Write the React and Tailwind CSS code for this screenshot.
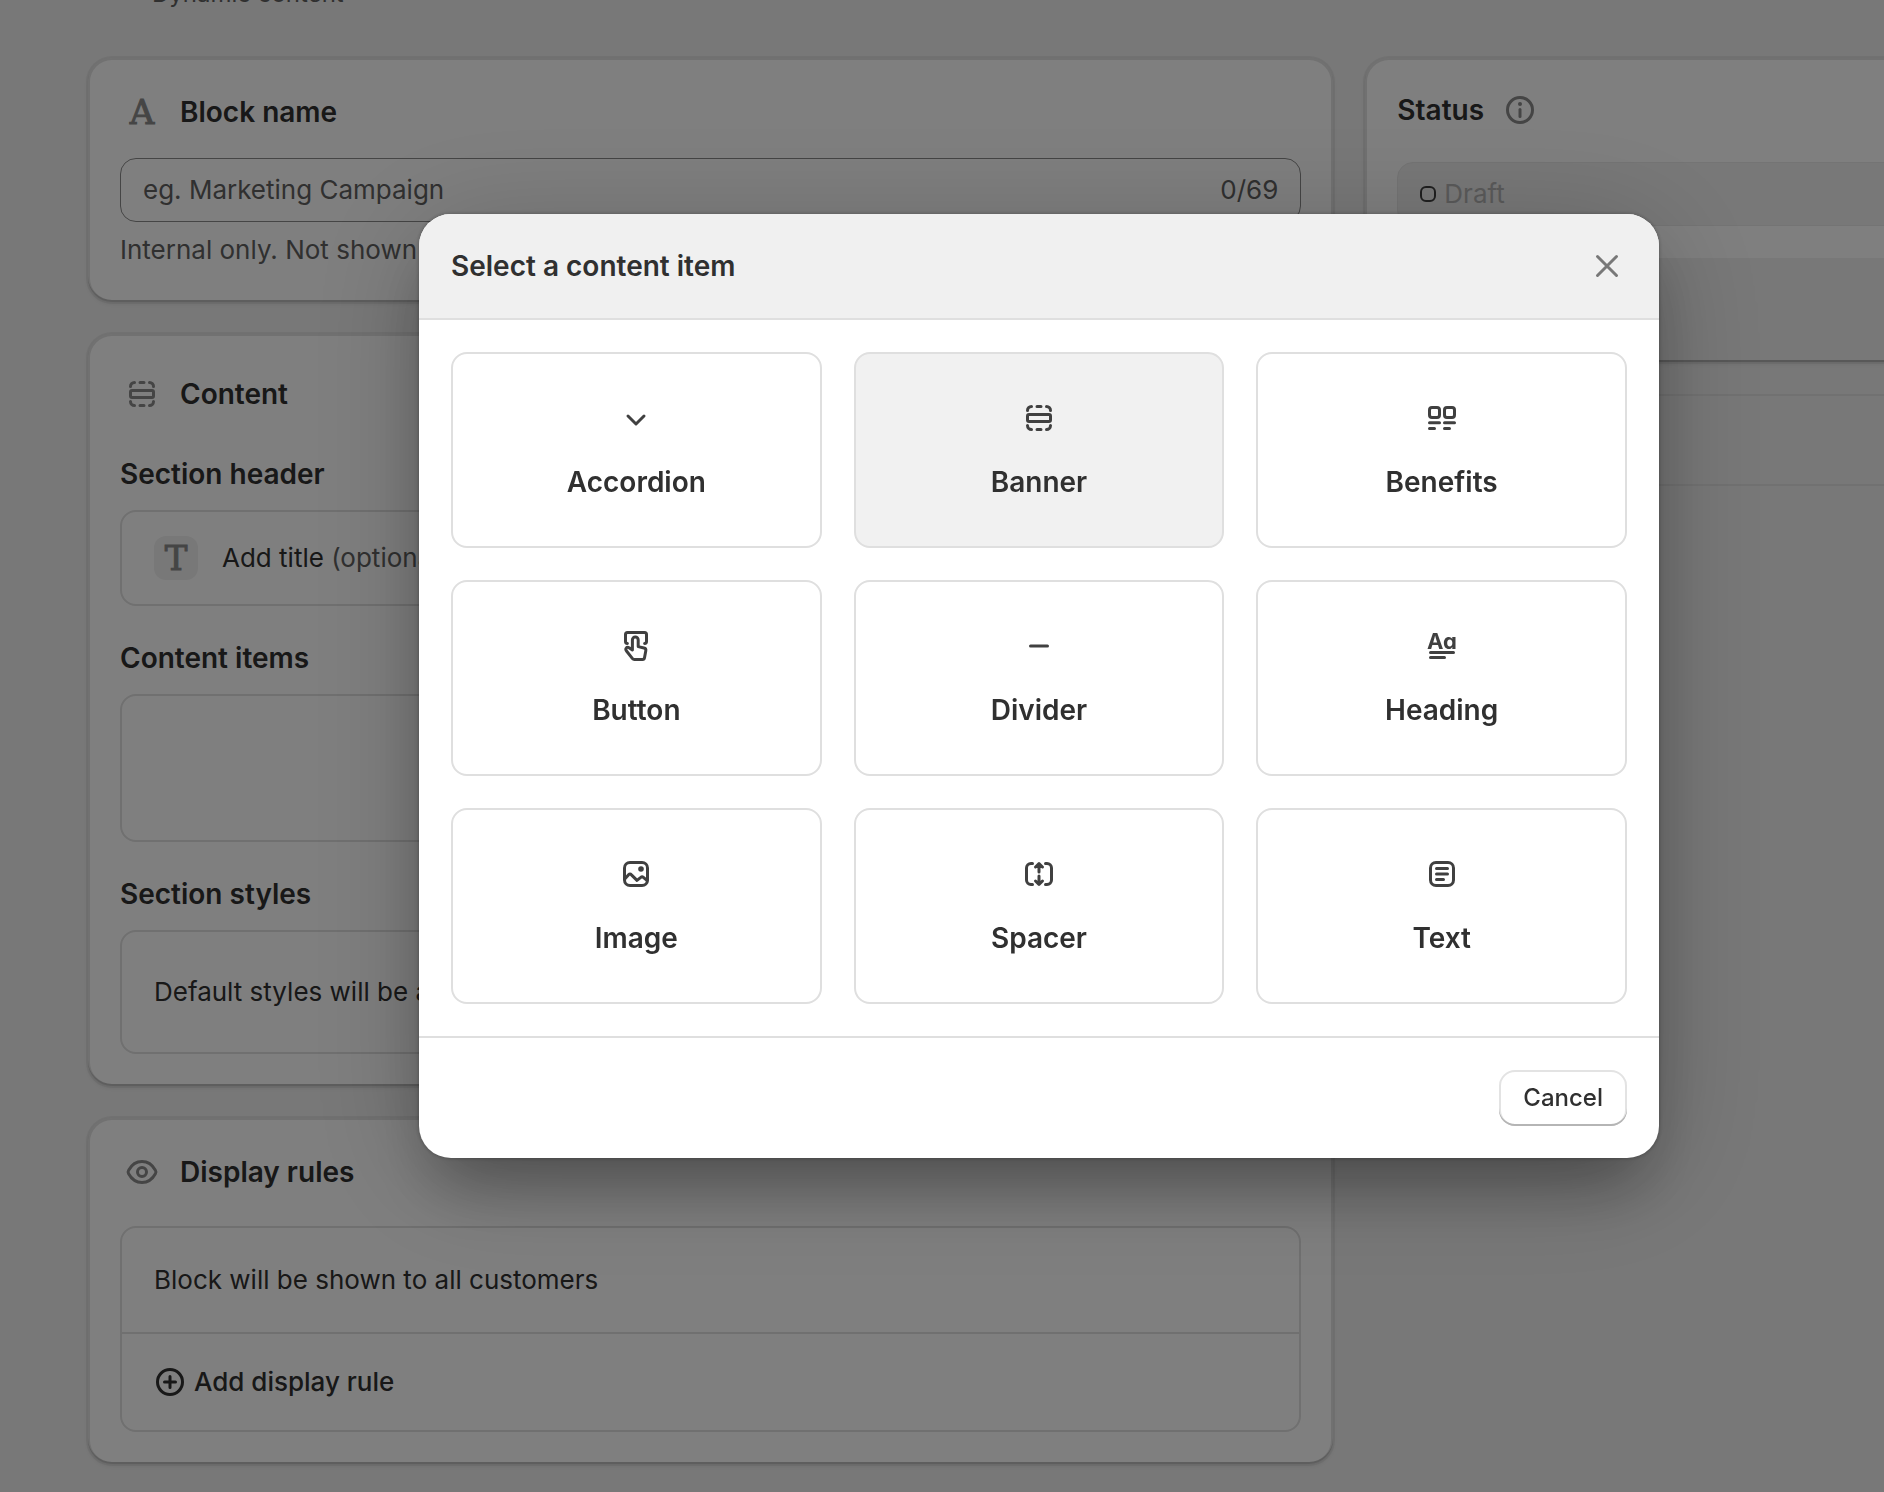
import React, { useState } from 'react';

const Icon = ({ className = '', children }) => (
    <svg
        viewBox="0 0 20 20"
        className={`h-10 w-10 shrink-0 ${className}`}
        fill="none"
        stroke="currentColor"
        strokeWidth="1.5"
        strokeLinecap="round"
        strokeLinejoin="round"
        aria-hidden="true"
    >
        {children}
    </svg>
);

const ChevronIcon = () => (
    <Icon>
        <path d="m6 9 4 4 4-4" />
    </Icon>
);

const SectionIcon = ({ className }) => (
    <Icon className={className}>
        <rect x="4.25" y="8.25" width="11.5" height="3.5" rx="0.75" />
        <path d="M4.25 6.25a2 2 0 0 1 2-2M9 4.25h2M13.75 4.25a2 2 0 0 1 2 2" />
        <path d="M4.25 13.75a2 2 0 0 0 2 2M9 15.75h2M13.75 15.75a2 2 0 0 0 2-2" />
    </Icon>
);

const BenefitsIcon = () => (
    <Icon>
        <rect x="3.75" y="4.75" width="5" height="5" rx="1.25" />
        <rect x="11.25" y="4.75" width="5" height="5" rx="1.25" />
        <path d="M3.75 12.35h5M11.25 12.35h5M3.75 15.25h2.5M11.25 15.25h2.5" />
    </Icon>
);

const ButtonPressIcon = () => (
    <Icon>
        <path d="M5.7 8.75a1 1 0 0 1-.95-1V4.25a1 1 0 0 1 1-1h8.5a1 1 0 0 1 1 1v3.5a1 1 0 0 1-.95 1" />
        <path d="M8.2 12V6.95a1.45 1.45 0 0 1 2.9 0v3.35l2.9.7a1.2 1.2 0 0 1 .9 1.4l-.65 3.5a1 1 0 0 1-1 .85H9.2a1.2 1.2 0 0 1-.95-.45l-2.9-3.7c-.4-.5-.55-1.2-.2-1.6.35-.45.95-.4 1.4-.1Z" />
    </Icon>
);

const MinusIcon = () => (
    <Icon>
        <path d="M5.75 10h8.5" />
    </Icon>
);

const HeadingIcon = () => (
    <Icon>
        <text
            x="10"
            y="11.3"
            textAnchor="middle"
            fontSize="11"
            className="fill-current stroke-none font-bold [font-feature-settings:'cv11']"
        >
            Aa
        </text>
        <path d="M4.25 13.25h11.5M4.25 15.75h7" />
    </Icon>
);

const ImageIcon = () => (
    <Icon>
        <rect x="4.25" y="4.25" width="11.5" height="11.5" rx="2.75" />
        <circle cx="12.5" cy="7.5" r="1.4" className="fill-current stroke-none" />
        <path d="m4.5 12.4 1.9-2.1a.8.8 0 0 1 1.2 0l2.9 2.9 1.9-1.5a1 1 0 0 1 1.3 0l1.9 1.6" />
    </Icon>
);

const SpacerIcon = () => (
    <Icon>
        <path d="M6.75 4.75h-.75a2.25 2.25 0 0 0-2.25 2.25v6a2.25 2.25 0 0 0 2.25 2.25h.75" />
        <path d="M13.25 4.75h.75a2.25 2.25 0 0 1 2.25 2.25v6a2.25 2.25 0 0 1-2.25 2.25h-.75" />
        <path d="M10 5v4M8.25 6.5 10 4.85l1.75 1.65M10 11v4M8.25 13.5 10 15.15l1.75-1.65" />
    </Icon>
);

const TextBlockIcon = () => (
    <Icon>
        <rect x="4.25" y="4.25" width="11.5" height="11.5" rx="2.75" />
        <path d="M7.25 7.25h5.5M7.25 10h5.5M7.25 12.75h3.5" />
    </Icon>
);

const EyeIcon = ({ className }) => (
    <Icon className={className}>
        <path d="M16.700 9.1c.35.55.35 1.25 0 1.8C15.6 12.9 13.4 15.25 10 15.25S4.400 12.9 3.300 10.900a1.75 1.75 0 0 1 0-1.8C4.400 7.1 6.6 4.75 10 4.75S15.600 7.1 16.700 9.1Z" />
        <circle cx="10" cy="10" r="2.25" />
    </Icon>
);

const PlusCircleIcon = () => (
    <Icon>
        <circle cx="10" cy="10" r="6.25" />
        <path d="M10 7.25v5.5M7.25 10h5.5" />
    </Icon>
);

const InfoIcon = () => (
    <Icon className="text-[#8a8a8a]">
        <circle cx="10" cy="10" r="6.25" />
        <path d="M10 9.75v3.5" />
        <circle cx="10" cy="7" r="1" className="fill-current stroke-none" />
    </Icon>
);

const CloseIcon = () => (
    <Icon>
        <path d="m5.25 5.25 9.5 9.5M14.75 5.25l-9.5 9.5" />
    </Icon>
);

const LetterIcon = ({ letter }) => (
    <span
        aria-hidden="true"
        className="text-[34px] leading-10 text-[#8a8a8a] [-webkit-text-stroke:1px_#8a8a8a] font-['DejaVu_Serif',serif]"
    >
        {letter}
    </span>
);

const contentItems = [
    { name: 'Accordion', icon: ChevronIcon },
    { name: 'Banner', icon: SectionIcon },
    { name: 'Benefits', icon: BenefitsIcon },
    { name: 'Button', icon: ButtonPressIcon },
    { name: 'Divider', icon: MinusIcon },
    { name: 'Heading', icon: HeadingIcon },
    { name: 'Image', icon: ImageIcon },
    { name: 'Spacer', icon: SpacerIcon },
    { name: 'Text', icon: TextBlockIcon },
];

const Card = ({ className = '', children }) => (
    <section
        className={`rounded-3xl bg-white shadow-[inset_0_-2px_0_rgba(0,0,0,0.17),inset_0_0_0_2px_rgba(0,0,0,0.11),0_0_0_2px_rgba(0,0,0,0.05),0_2px_4px_rgba(0,0,0,0.08)] ${className}`}
    >
        {children}
    </section>
);

const CardTitle = ({ icon, children }) => (
    <div className="flex items-center gap-4">
        <span className="flex h-11 w-11 items-center justify-center">{icon}</span>
        <h2 className="text-[28px] leading-10 font-semibold">{children}</h2>
    </div>
);

const SelectItemModal = ({ onClose }) => {
    const [active, setActive] = useState('Banner');

    return (
        <div className="fixed inset-0 z-10 flex items-start justify-center bg-black/50 pt-[214px] pl-[194px]">
            <div
                role="dialog"
                aria-modal="true"
                aria-labelledby="modal-title"
                className="w-full max-w-[1240px] overflow-hidden rounded-[32px] bg-white shadow-[0_0_4px_rgba(0,0,0,0.3),0_16px_120px_rgba(0,0,0,0.2),0_40px_64px_-16px_rgba(0,0,0,0.3)]"
            >
                <div className="flex items-center justify-between border-b-2 border-[#dfdfdf] bg-[#f0f0f0] p-8">
                    <h2 id="modal-title" className="text-[28px] leading-10 font-semibold">
                        Select a content item
                    </h2>
                    <button type="button" aria-label="Close" onClick={onClose} className="text-[#787878]">
                        <CloseIcon />
                    </button>
                </div>

                <div className="grid grid-cols-3 gap-8 p-8">
                    {contentItems.map(({ name, icon: ItemIcon }) => (
                        <button
                            key={name}
                            type="button"
                            onMouseEnter={() => setActive(name)}
                            className={`flex flex-col items-center gap-6 rounded-2xl border-2 border-[#dfdfdf] py-11 text-[#404040] ${
                                active === name ? 'bg-[#f1f1f1]' : 'bg-white'
                            }`}
                        >
                            <ItemIcon />
                            <span className="text-[28px] leading-10 font-semibold text-[#303030]">{name}</span>
                        </button>
                    ))}
                </div>

                <div className="flex justify-end border-t-2 border-[#dfdfdf] p-8">
                    <button
                        type="button"
                        onClick={onClose}
                        className="rounded-2xl bg-white px-6 py-2 text-2xl leading-10 font-medium shadow-[inset_0_-2px_0_#b5b5b5,inset_0_0_0_2px_#e3e3e3]"
                    >
                        Cancel
                    </button>
                </div>
            </div>
        </div>
    );
};

const App = () => {
    const [open, setOpen] = useState(true);
    const [name, setName] = useState('');

    return (
        <div className="min-h-screen overflow-hidden bg-[#f0f0f0] font-['Inter',sans-serif] text-[26px] leading-10 text-[#303030]">
            {/* Scrolled page header */}
            <header className="-mt-[22px] pb-12 pl-[152px]">
                <p className="text-2xl leading-8 text-[#616161]">Dynamic content</p>
            </header>

            <main className="ml-[88px] -mr-[104px] grid grid-cols-[2fr_1fr] items-start gap-8">
                <div className="flex flex-col gap-8">
                    <Card className="p-8">
                        <CardTitle icon={<LetterIcon letter="A" />}>Block name</CardTitle>
                        <div className="mt-6 flex h-16 items-center rounded-2xl border border-[#8a8a8a] px-[22px]">
                            <label htmlFor="block-name" className="sr-only">
                                Block name
                            </label>
                            <input
                                id="block-name"
                                type="text"
                                maxLength={69}
                                value={name}
                                onChange={(e) => setName(e.target.value)}
                                placeholder="eg. Marketing Campaign"
                                className="min-w-0 flex-1 bg-transparent outline-none placeholder:text-[#616161]"
                            />
                            <span className="text-[#616161]">{name.length}/69</span>
                        </div>
                        <p className="mt-2 text-[#616161]">Internal only. Not shown to customers.</p>
                    </Card>

                    <Card className="flex flex-col gap-8 p-8">
                        <div className="flex h-14 items-center">
                            <CardTitle icon={<SectionIcon className="text-[#8a8a8a]" />}>Content</CardTitle>
                        </div>
                        <div className="flex flex-col gap-4">
                            <h3 className="text-[28px] leading-10 font-semibold">Section header</h3>
                            <button
                                type="button"
                                className="flex items-center gap-6 rounded-2xl border-2 border-[#e0e0e0] px-8 py-6 text-left"
                            >
                                <span className="flex h-11 w-11 items-center justify-center rounded-xl bg-[#f0f0f0]">
                                    <LetterIcon letter="T" />
                                </span>
                                <span>
                                    Add title <span className="text-[#616161]">(optional)</span>
                                </span>
                            </button>
                        </div>
                        <div className="flex flex-col gap-4">
                            <h3 className="text-[28px] leading-10 font-semibold">Content items</h3>
                            <div className="h-[148px] rounded-2xl border-2 border-[#e0e0e0]" />
                        </div>
                        <div className="flex flex-col gap-4">
                            <h3 className="text-[28px] leading-10 font-semibold">Section styles</h3>
                            <p className="rounded-2xl border-2 border-[#e0e0e0] px-8 py-10">
                                Default styles will be applied
                            </p>
                        </div>
                    </Card>

                    <Card className="flex flex-col gap-8 p-8">
                        <CardTitle icon={<EyeIcon className="text-[#8a8a8a]" />}>Display rules</CardTitle>
                        <div className="divide-y-2 divide-[#e0e0e0] rounded-2xl border-2 border-[#e0e0e0]">
                            <p className="p-8">Block will be shown to all customers</p>
                            <div className="p-7">
                                <button type="button" className="flex items-center gap-1 font-medium">
                                    <PlusCircleIcon />
                                    Add display rule
                                </button>
                            </div>
                        </div>
                    </Card>
                </div>

                <div className="flex flex-col gap-8">
                    <Card>
                        <div className="p-8">
                            <div className="flex items-center gap-4">
                                <h2 className="text-[28px] leading-10 font-semibold">Status</h2>
                                <InfoIcon />
                            </div>
                            <div className="mt-8 flex h-16 items-center gap-2 rounded-2xl border border-[#e8e8e8] bg-[#f0f0f0] px-[22px]">
                                <span className="h-4 w-4 shrink-0 rounded-md border-2 border-[#404040]" />
                                <label htmlFor="status" className="sr-only">
                                    Status
                                </label>
                                <select
                                    id="status"
                                    disabled
                                    className="flex-1 appearance-none bg-transparent text-[#b5b5b5] opacity-100"
                                >
                                    <option>Draft</option>
                                </select>
                            </div>
                        </div>
                        <div className="h-[104px] rounded-b-3xl bg-black/6" />
                    </Card>
                    <div className="h-[92px] rounded-3xl border-2 border-[#e3e3e3]" />
                </div>
            </main>

            {open && <SelectItemModal onClose={() => setOpen(false)} />}
        </div>
    );
};

export default App;
